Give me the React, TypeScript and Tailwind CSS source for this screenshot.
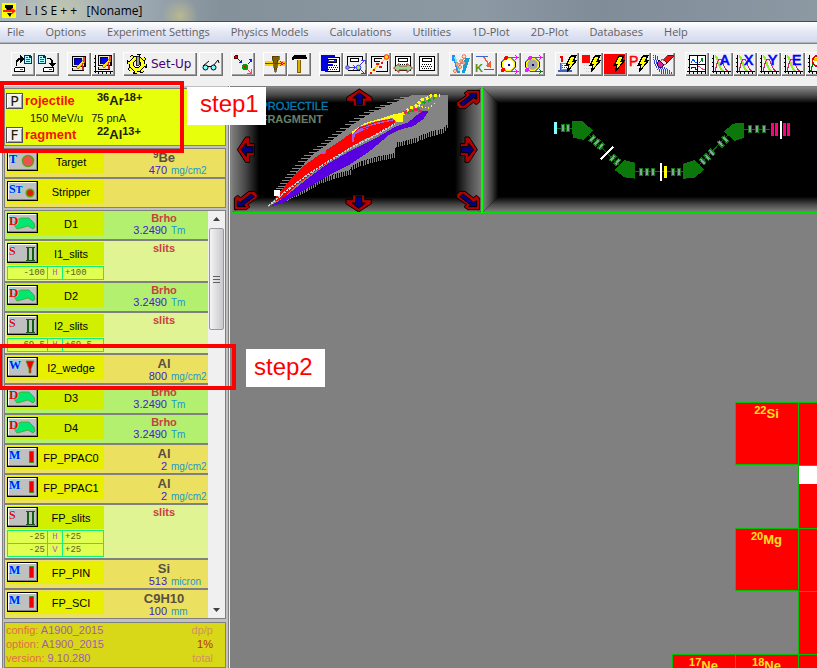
import type { ReactNode } from 'react';
import { clsx } from 'clsx';

const menuItems = [
  'File',
  'Options',
  'Experiment Settings',
  'Physics Models',
  'Calculations',
  'Utilities',
  '1D-Plot',
  '2D-Plot',
  'Databases',
  'Help',
];

/* ---------- toolbar icons, drawn on a 24x24 grid ---------- */

function Icon({ children }: { children: ReactNode }) {
  return (
    <svg viewBox="0 0 24 24" className="w-6 h-6 shrink-0" shapeRendering="crispEdges" aria-hidden="true">
      {children}
    </svg>
  );
}

const Sheet = ({ x }: { x: number }) => (
  <g transform={`translate(${x} 3)`}>
    <path d="M0 0h6l2 2v7H0z" fill="#003060" />
    <path d="M1 1h4v2h2v5H1z" fill="#b0ffff" />
    <path d="M2 2.500h2M2 4.500h4M2 6.500h4" stroke="#0060c0" fill="none" />
  </g>
);

const Disk = ({ x }: { x: number }) => (
  <g transform={`translate(${x} 15)`}>
    <path d="M1 0h10v5H0V1z" fill="#000" />
    <path d="M1 1h9v3H1z" fill="#fff" />
    <path d="M6 2h3v1H6z" fill="#f00" />
  </g>
);

const Monitor = () => (
  <g>
    <path d="M5 4h13l1 1v10H5z" fill="#000" />
    <path d="M6 5h11v9H6z" fill="#f0e8c0" />
    <path d="M7 6h8v7H7z" fill="#0000f0" />
    <path d="M7 6h8v1H7zM7 6h1v7H7z" fill="#000060" />
    <path d="M5 16h12v3H5z" fill="#000" />
    <path d="M6 16h10v2H6z" fill="#e8e0c0" />
    <path d="M9 15l7-7 2 2-7 7z" fill="#ffe000" stroke="#402000" strokeWidth="0.500" />
    <path d="M15 11l1 0 1 7h-2z" fill="#e02020" />
    <path d="M16 5l2 0 0 4-2 1z" fill="#f04030" />
  </g>
);

const Calc = () => (
  <g>
    <path d="M4.500 4.500h15v14h-15z" fill="#fff" stroke="#000" />
    <path d="M7.500 6.500h9v3h-9z" fill="#fff" stroke="#000" />
    <path d="M7 12.500h10M6 14.500h11M7 16.500h10" stroke="#000" strokeDasharray="1 1" fill="none" />
  </g>
);

const Bolt = () => (
  <path d="M16 4h5l-3 5h3l-9 11 2-7h-3z" fill="#ffff00" stroke="#000" strokeWidth="1.200" />
);

const Axes = () => (
  <path d="M4.500 3v18M3 19.500h19M7.500 19v3M11.500 19v3M15.500 19v3M19.500 19v3M3 6.500h2M3 10.500h2M3 14.500h2" stroke="#000" fill="none" />
);

const Curves = ({ letter }: { letter: string }) => (
  <Icon>
    <path d="M6 4c4 1 3 14 9 15" stroke="#90f020" strokeWidth="2" fill="none" />
    <path d="M6 19c2-5 2-12 5-12s3 10 8 12" stroke="#d02060" strokeWidth="1.200" fill="none" />
    <Axes />
    <text x="11" y="13" fontSize="14" fill="#0000ff" stroke="#0000ff" strokeWidth="0.700" className="font-['Liberation_Sans',sans-serif]">
      {letter}
    </text>
  </Icon>
);

const Beam = ({ fill, out }: { fill: string; out: string }) => (
  <Icon>
    <g shapeRendering="geometricPrecision">
      <circle cx="11.500" cy="12.500" r="6" fill={fill} stroke="#ffff00" strokeWidth="1.500" />
      <path d="M9 5.500h5l4.500 4.500v5l-4.500 4.500H9L4.500 15v-5z" fill="none" stroke="#000080" />
    </g>
    <path d="M9 5.500h12M18 3.500l3 2-3 2" stroke="#ff00ff" fill="none" />
    <path d="M9 19.500h12M18 17.500l3 2-3 2" stroke={out} fill="none" />
    <path d="M11 12h2v2h-2z" fill="#0000a0" />
    <circle cx="9" cy="6" r="2" fill={out === '#008000' ? '#e020ff' : '#ff0000'} />
    <circle cx="6" cy="18" r="2" fill={out === '#008000' ? '#e020ff' : '#ff0000'} />
  </Icon>
);

const icons: Record<string, ReactNode> = {
  open: (
    <Icon>
      <path d="M5.500 14V9.500L8 7h3" stroke="#000" strokeWidth="1.600" fill="none" />
      <path d="M9 3l4 4-4 4z" fill="#000" />
      <Sheet x={13} />
      <Disk x={3} />
    </Icon>
  ),
  save: (
    <Icon>
      <path d="M12 6.500h3l2 2V12" stroke="#000" strokeWidth="1.600" fill="none" />
      <path d="M13 11h8l-4 4z" fill="#000" />
      <Sheet x={3} />
      <Disk x={8} />
    </Icon>
  ),
  screen: (
    <Icon>
      <Monitor />
    </Icon>
  ),
  screenPlot: (
    <Icon>
      <g transform="translate(2 -1)">
        <Monitor />
      </g>
      <Axes />
    </Icon>
  ),
  glasses: (
    <Icon>
      <g shapeRendering="geometricPrecision">
        <path d="M4 14l6-5M14 14l5-6M19 8l1 3" stroke="#000" fill="none" />
        <circle cx="6.500" cy="15.500" r="2.500" fill="#80ffff" stroke="#000" />
        <circle cx="14.500" cy="15.500" r="2.500" fill="#80ffff" stroke="#000" />
        <path d="M9 14.500h3" stroke="#000" />
      </g>
    </Icon>
  ),
  collide: (
    <Icon>
      <path d="M6 6l4 4M17 12l3-3" stroke="#0020ff" />
      <path d="M11 7v4H7zM17 7h4v4z" fill="#0020ff" />
      <path d="M16 17l4 4M20 17v4h-4" stroke="#ff4060" fill="none" />
      <circle cx="5" cy="5" r="2" fill="#e00000" stroke="#000" strokeWidth="0.600" />
      <circle cx="14" cy="15" r="3" fill="#00a000" />
      <circle cx="14" cy="15" r="1.500" fill="#ff0000" />
    </Icon>
  ),
  target: (
    <Icon>
      <path d="M2 9h20v5H2z" fill="#ffd000" />
      <path d="M9 4h7v4h-1l-1 8-1 4h-1l-1-4-1-8H9z" fill="#806000" stroke="#403000" strokeWidth="0.600" />
      <path d="M2 11.500h17M17 9.500l4 2-4 2" stroke="#ff0000" fill="none" />
    </Icon>
  ),
  hammer: (
    <Icon>
      <path d="M5 5l3-2h11v2h1v2H8L5 8z" fill="#000" />
      <path d="M10 8h4v13h-4z" fill="#806000" />
      <path d="M11 8h2v12h-2z" fill="#e0b000" />
    </Icon>
  ),
  calcBlue: (
    <Icon>
      <path d="M2 3h14v2H6v14H2z" fill="#0000e0" />
      <path d="M6.500 5.500h14v14h-14z" fill="#fff" stroke="#000" />
      <path d="M6 5h3v15H6z" fill="#0000e0" />
      <path d="M8.500 7.500h9v3h-9z" fill="#2020ff" stroke="#000" />
      <path d="M10 8.500h5" stroke="#fff" />
      <path d="M8 12h6v2H8z" fill="#0000e0" />
      <path d="M9 13.500h10M8 15.500h11M9 17.500h10" stroke="#000060" strokeDasharray="1 1" />
    </Icon>
  ),
  calcArrows: (
    <Icon>
      <path d="M4.500 14V4.500h15V8M4.500 18.500h12" fill="none" stroke="#000" />
      <path d="M7.500 6.500h8v3h-8z" fill="#fff" stroke="#000" />
      <path d="M6 15.500h6M17 13l4-4M17 17l4 4" stroke="#4030ff" fill="none" />
      <path d="M18 8h4v4M18 21.500h4v-4M10 13l2 2.500-2 2.500" stroke="#4030ff" fill="none" />
      <g shapeRendering="geometricPrecision">
        <circle cx="4.500" cy="15.500" r="1.800" fill="#80c040" stroke="#4030ff" />
        <circle cx="15.500" cy="15.500" r="2.300" fill="#80ff40" stroke="#4030ff" />
      </g>
    </Icon>
  ),
  calcReact: (
    <Icon>
      <path d="M4.500 16V4.500h12M20.500 9v10.500H9" fill="none" stroke="#000" />
      <path d="M15 6.500H7.500v3h5" fill="none" stroke="#000" />
      <path d="M3 21L19 6" stroke="#ffd000" strokeDasharray="2 1" />
      <path d="M9 11h3v2H9zM12 14h3v2h-3zM6 17h2v2H6zM14 10h2v2h-2zM3 20h2v2H3z" fill="#f01000" />
      <circle cx="19.500" cy="5" r="2.300" fill="#ffe000" stroke="#ff2000" shapeRendering="geometricPrecision" />
    </Icon>
  ),
  calcRange: (
    <Icon>
      <Calc />
      <path d="M2.500 16L8 11.500V14h8v-2.500l5.500 4.500-5.500 4.500V18H8v2.500z" fill="#98d098" stroke="#a04030" shapeRendering="geometricPrecision" />
    </Icon>
  ),
  calc: (
    <Icon>
      <Calc />
    </Icon>
  ),
  atoms: (
    <Icon>
      <path d="M3 3h3l4 12 1 6H8L5 9H3z" fill="#2090f0" />
      <path d="M16 6h5l-5 15h-3z" fill="#10a0d8" />
      <path d="M5 5h2l4 14H9z" fill="#60f0f0" />
      <path d="M6 20L16 4M7 12l11-1M8 18l8-13" stroke="#907050" fill="none" strokeWidth="0.500" />
      <g fill="#fff0e0" stroke="#f04820" strokeWidth="0.800" shapeRendering="geometricPrecision">
        <circle cx="15" cy="4.500" r="1.800" />
        <circle cx="12" cy="9" r="1.300" />
        <circle cx="8" cy="12" r="1.300" />
        <circle cx="15" cy="11" r="1.300" />
        <circle cx="6" cy="19" r="1.500" />
        <circle cx="11" cy="15" r="1.500" />
      </g>
    </Icon>
  ),
  kinematics: (
    <Icon>
      <path d="M3 4.500h12M11 17.500h10" stroke="#4060d0" strokeWidth="1.600" />
      <path d="M11 5l5 8" stroke="#f06030" strokeWidth="1.500" />
      <path d="M18 9v7l-6-2z" fill="#f06030" />
      <text x="2" y="20" fontSize="11" fontWeight="bold" fill="#509020" className="font-['Liberation_Sans',sans-serif]">
        K
      </text>
    </Icon>
  ),
  beam: <Beam fill="#fff" out="#ff00ff" />,
  beamGray: <Beam fill="#a8a8a8" out="#008000" />,
  boltOne: (
    <Icon>
      <path d="M5 4h3v6H6V6H5z" fill="#f00000" />
      <path d="M3 20h14v-2H6v-7H5v7H3z" fill="#4060c0" />
      <path d="M6 11h8v6H6z" fill="#fff" stroke="#8090c0" />
      <path d="M7 13.500h6M7 15.500h6" stroke="#008040" strokeDasharray="1 1" />
      <Bolt />
    </Icon>
  ),
  boltSquare: (
    <Icon>
      <path d="M3 3h8v8H3z" fill="#ff0000" />
      <path d="M5 13h10M5 16h10M7 19h8" stroke="#d0d0d0" strokeDasharray="1 1" />
      <Bolt />
    </Icon>
  ),
  boltRed: (
    <Icon>
      <path d="M1 2h21v20H1z" fill="#ff0000" />
      <Bolt />
    </Icon>
  ),
  boltP: (
    <Icon>
      <text x="2" y="14" fontSize="14" fill="#ff0000" stroke="#ff0000" strokeWidth="0.500" className="font-['Liberation_Sans',sans-serif]">
        P
      </text>
      <Bolt />
    </Icon>
  ),
  eraser: (
    <Icon>
      <path d="M2 3.500h4M2 5.500h6M2 7.500h6M3 9.500h5M3 11.500h6M4 13.500h6M5 15.500h10M6 17.500h12M8 19.500h12M10 21.500h12" stroke="#3040e0" strokeDasharray="1 1" fill="none" />
      <path d="M3 4.500h4M3 6.500h5M2 8.500h6M2 10.500h7M3 12.500h6M4 14.500h9M6 16.500h10M7 18.500h12M9 20.500h12" stroke="#3040e0" strokeDasharray="1 1" strokeDashoffset="1" fill="none" />
      <path d="M13 7l4-4h5v2l-7 7-3-1z" fill="#f01010" stroke="#400000" strokeWidth="0.700" />
      <path d="M11 7l5 4-3 2-4-3z" fill="#ffe0e0" stroke="#000" strokeWidth="0.500" />
      <path d="M8 8l5 5-2 2H8l-2-3z" fill="#d020a0" stroke="#000" strokeWidth="0.800" />
    </Icon>
  ),
  plots: (
    <Icon>
      <path d="M4.500 3.500h16v16h-16z" fill="#fff" stroke="#000" />
      <path d="M12.500 4v15M5 12.500h15M2 19.500h3M4.500 19v3M8.500 19v3M12.500 19v3M16.500 19v3M20.500 19v3M3 7.500h2M3 15.500h2" stroke="#000" />
      <path d="M6 11l2-4 2 3 2 1" stroke="#0060ff" fill="none" />
      <path d="M14 11l2-2 1-3 1 4" stroke="#008030" fill="none" />
      <path d="M6 17v-2h4v2h2" stroke="#0020a0" fill="none" />
      <path d="M13 14c3 0 3 4 7 4" stroke="#f04080" fill="none" />
    </Icon>
  ),
  plotA: <Curves letter="A" />,
  plotX: <Curves letter="X" />,
  plotY: <Curves letter="Y" />,
  plotE: <Curves letter="E" />,
  plotS: (
    <Icon>
      <Axes />
      <path d="M6 19c1-8 3-8 5-8" stroke="#008000" fill="none" strokeWidth="1.400" />
      <circle cx="13" cy="9" r="5.500" fill="#fff" stroke="#e00000" strokeWidth="1.500" />
      <path d="M9 6h3v3H9z" fill="#ffc000" />
    </Icon>
  ),
};

const toolGroups: { gap: string; tools: string[] }[] = [
  { gap: 'ml-2', tools: ['calcBlue', 'calcArrows', 'calcReact', 'calcRange', 'calc'] },
  { gap: 'ml-2.5', tools: ['atoms', 'kinematics', 'beam', 'beamGray'] },
  { gap: 'ml-2.5', tools: ['boltOne', 'boltSquare', 'boltRed', 'boltP', 'eraser'] },
  { gap: 'ml-2.5', tools: ['plots', 'plotA', 'plotX', 'plotY', 'plotE', 'plotS'] },
];

function ToolButton({ name, className }: { name: string; className?: string }) {
  return (
    <button
      type="button"
      aria-label={name}
      className={clsx(
        'w-6 h-6 shrink-0 bg-[#f0f0f0] shadow-[inset_1px_1px_0_#fff,inset_-1px_-1px_0_#707070,inset_-2px_-2px_0_#a0a0a0]',
        className,
      )}
    >
      {icons[name]}
    </button>
  );
}

function Toolbar() {
  return (
    <div className="flex items-start h-[42px] pl-[11px] pt-2 bg-[#f0f0f0] overflow-hidden">
      <ToolButton name="open" />
      <ToolButton name="save" />
      <ToolButton name="screen" className="ml-2" />
      <ToolButton name="screenPlot" />
      <button
        type="button"
        className="flex items-center shrink-0 w-[74px] h-6 ml-2 pl-0.5 bg-[#f0f0f0] shadow-[inset_1px_1px_0_#fff,inset_-1px_-1px_0_#707070,inset_-2px_-2px_0_#a0a0a0]"
      >
        <Icon>
          <circle cx="12" cy="12" r="8.500" fill="none" stroke="#000" strokeWidth="4" strokeDasharray="3.400 3.200" />
          <circle cx="12" cy="12" r="7.500" fill="#ffff20" stroke="#000" />
          <circle cx="12" cy="12" r="8.500" fill="none" stroke="#ffff20" strokeWidth="2" strokeDasharray="2.400 4.200" />
          <circle cx="12" cy="12" r="3.500" fill="#f0f0f0" stroke="#000" />
          <path d="M11 4h3v9h-3z" fill="#a0a0a0" stroke="#000" strokeWidth="0.800" />
        </Icon>
        <span className="ml-0.5 font-['DejaVu_Sans',sans-serif] text-[12px] leading-4 text-[#480078]">Set-Up</span>
      </button>
      <ToolButton name="glasses" className="ml-0.5" />
      <ToolButton name="collide" className="ml-2" />
      <ToolButton name="target" className="ml-2" />
      <ToolButton name="hammer" />
      {toolGroups.map((group, index) => (
        <div key={index} className={clsx('flex shrink-0', group.gap)}>
          {group.tools.map((tool) => (
            <ToolButton key={tool} name={tool} />
          ))}
        </div>
      ))}
    </div>
  );
}

/* ---------- left set-up panel ---------- */

type Kind = 'T' | 'St' | 'D' | 'S' | 'W' | 'M';

interface Block {
  kind: Kind;
  name: string;
  title: ReactNode;
  value?: string;
  unit?: string;
  slits?: [string, string, string][];
}

const topBlocks: Block[] = [
  { kind: 'T', name: 'Target', title: <><sup className="text-[10px] -top-1">9</sup>Be</>, value: '470', unit: 'mg/cm2' },
  { kind: 'St', name: 'Stripper', title: '' },
];

const blocks: Block[] = [
  { kind: 'D', name: 'D1', title: 'Brho', value: '3.2490', unit: 'Tm' },
  { kind: 'S', name: 'I1_slits', title: 'slits', slits: [['-100', 'H', '+100']] },
  { kind: 'D', name: 'D2', title: 'Brho', value: '3.2490', unit: 'Tm' },
  { kind: 'S', name: 'I2_slits', title: 'slits', slits: [['-69.5', 'H', '+69.5']] },
  { kind: 'W', name: 'I2_wedge', title: 'Al', value: '800', unit: 'mg/cm2' },
  { kind: 'D', name: 'D3', title: 'Brho', value: '3.2490', unit: 'Tm' },
  { kind: 'D', name: 'D4', title: 'Brho', value: '3.2490', unit: 'Tm' },
  { kind: 'M', name: 'FP_PPAC0', title: 'Al', value: '2', unit: 'mg/cm2' },
  { kind: 'M', name: 'FP_PPAC1', title: 'Al', value: '2', unit: 'mg/cm2' },
  { kind: 'S', name: 'FP_slits', title: 'slits', slits: [['-25', 'H', '+25'], ['-25', 'V', '+25']] },
  { kind: 'M', name: 'FP_PIN', title: 'Si', value: '513', unit: 'micron' },
  { kind: 'M', name: 'FP_SCI', title: 'C9H10', value: '100', unit: 'mm' },
];

function BlockIcon({ kind }: { kind: Kind }) {
  const red = kind === 'D' || kind === 'S';
  return (
    <svg viewBox="0 0 31 20" className="block w-[31px] h-5 overflow-visible" aria-hidden="true">
      <path d="M0 0h31v20H0z" fill="#000" />
      <path d="M1 1h29v18H1z" fill="#808080" />
      <path d="M1 1h28v17H1z" fill="#fff" />
      <path d="M2 2h27v16H2z" fill="#c0c0c0" />
      {kind === 'T' && <circle cx="21" cy="10" r="5.500" fill="#f05050" stroke="#60a010" strokeWidth="1.500" />}
      {kind === 'St' && <circle cx="23" cy="12" r="3.800" fill="#e02000" stroke="#60a010" strokeWidth="1.500" />}
      {kind === 'D' && (
        <path d="M8 8l6-3h8l5 5 1 4-2 2-5-3-7 2-4 1-3-4z" fill="#00e870" stroke="#50a020" strokeWidth="0.800" />
      )}
      {kind === 'S' && (
        <path d="M19 4h9v1h-1v12h1v1h-9v-1h1V5h-1zM22 5v12h3V5z" fillRule="evenodd" fill="#106010" />
      )}
      {kind === 'W' && <path d="M19 4h8l-3 8v4h-2v-4z" fill="#f00000" stroke="#609010" strokeWidth="0.800" />}
      {kind === 'M' && <path d="M22.500 4.500h4v11h-4z" fill="#f00000" stroke="#409010" />}
      <text
        x="2"
        y="12"
        fontSize={kind === 'D' ? 13 : 12}
        fontWeight="bold"
        fill={red ? '#f00000' : '#0020f0'}
        stroke="#70f0ff"
        strokeWidth="1"
        paintOrder="stroke"
        className="font-['Liberation_Serif',serif]"
      >
        {kind === 'St' ? (
          <>
            S<tspan fontSize="10">T</tspan>
          </>
        ) : (
          kind
        )}
      </text>
    </svg>
  );
}

function BlockRow({ block }: { block: Block }) {
  const { kind, name, title, value, unit, slits } = block;
  const magnetic = kind === 'D' || kind === 'S';
  return (
    <li
      className={clsx(
        'flex pl-0.5 pt-px pb-px',
        kind === 'D' && 'bg-[#b4f070]',
        kind === 'S' && 'bg-[#e0f494]',
        !magnetic && 'bg-[#ece060]',
      )}
    >
      <div className="w-[97px] shrink-0">
        <div className={clsx('flex pt-px h-[23px] mb-[3px]', magnetic ? 'bg-[#d0f000]' : 'bg-[#e8f000]', slits && 'mb-px')}>
          <button type="button" aria-label={`Edit ${name}`} className="h-5 shrink-0">
            <BlockIcon kind={kind} />
          </button>
          <span className="flex-1 pt-px text-center text-[11px] leading-5 text-black whitespace-nowrap">{name}</span>
        </div>
        {slits && (
          <table className="w-full table-fixed border-collapse bg-[#e0ff50] font-['Liberation_Mono',monospace] text-[9px] leading-3 text-[#606020]">
            <tbody>
              {slits.map(([low, axis, high]) => (
                <tr key={axis}>
                  <td className="w-10 border border-[#10f080] p-0 pr-0.5 text-right">{low}</td>
                  <td className="w-[15px] border border-[#10f080] p-0 text-center text-[#b060c0]">{axis}</td>
                  <td className="border border-[#10f080] p-0 pl-0.5">{high}</td>
                </tr>
              ))}
            </tbody>
          </table>
        )}
      </div>
      <div className="flex-1 min-w-0">
        <p
          className={clsx(
            'pl-4 text-center font-bold',
            magnetic ? 'text-[11px] leading-3 text-[#c84040]' : 'text-[13px] leading-4 text-[#585040]',
          )}
        >
          {title}
        </p>
        {value && (
          <p className={clsx('flex items-baseline gap-1 text-[11px] whitespace-nowrap', magnetic ? 'leading-3' : 'leading-2')}>
            <span className="w-[63px] shrink-0 text-right text-[#4020d0]">{value}</span>
            <span className="text-[10px] text-[#1898d0]">{unit}</span>
          </p>
        )}
      </div>
    </li>
  );
}

function BlockScrollbar() {
  return (
    <div className="flex flex-col items-center w-[17px] shrink-0 bg-[#f0f0f0]">
      <svg viewBox="0 0 17 17" className="w-[17px] h-[17px]" aria-hidden="true">
        <path d="M5 10l3.500-4 3.500 4z" fill="#404040" />
      </svg>
      <div className="flex flex-col items-center justify-center gap-0.5 w-[15px] h-[102px] rounded-xs border border-[#989898] bg-linear-to-r from-[#f4f4f4] to-[#c8c8cc]">
        <span className="w-[7px] h-px bg-[#606060]" />
        <span className="w-[7px] h-px bg-[#606060]" />
        <span className="w-[7px] h-px bg-[#606060]" />
      </div>
      <svg viewBox="0 0 17 17" className="w-[17px] h-[17px] mt-auto" aria-hidden="true">
        <path d="M5 7l3.500 4L12 7z" fill="#404040" />
      </svg>
    </div>
  );
}

function Nuclide({ mass, symbol, charge }: { mass: string; symbol: string; charge?: string }) {
  return (
    <span className="font-bold text-[13px]">
      <sup className="text-[11px] -top-1">{mass}</sup>
      {symbol}
      {charge && <sup className="text-[11px] -top-1">{charge}</sup>}
    </span>
  );
}

function IonLine({ initial, rest, children }: { initial: string; rest: string; children: ReactNode }) {
  return (
    <div className="flex items-center h-[18px] pl-px">
      <button
        type="button"
        aria-label={initial + rest}
        className="w-[17px] h-4 border border-[#505050] bg-[#f0f0f0] shadow-[inset_1px_1px_0_#fff,inset_-1px_-1px_0_#a0a0a0] font-['DejaVu_Sans',sans-serif] text-[14px] leading-3"
      >
        {initial}
      </button>
      <span className="w-[74px] pl-0.5 font-bold text-[13px] leading-4 text-[#f81000]">{rest}</span>
      {children}
    </div>
  );
}

function SetupPanel() {
  return (
    <aside className="w-[230px] shrink-0 pl-0.5 pr-px bg-[#f0f0f0]">
      <div className="flex flex-col gap-0.5 h-full border-x border-[#808080] bg-[#c0c0c0] pl-px pr-0.5 pt-0.5">
        <section className="h-[58px] border border-[#808080] bg-[#e8ff0c] pt-[3px] text-[#202000]">
          <IonLine initial="P" rest="rojectile">
            <Nuclide mass="36" symbol="Ar" charge="18+" />
          </IonLine>
          <p className="flex gap-2 pl-[25px] text-[11px] leading-4">
            <span>150 MeV/u</span>
            <span>75 pnA</span>
          </p>
          <IonLine initial="F" rest="ragment">
            <Nuclide mass="22" symbol="Al" charge="13+" />
          </IonLine>
        </section>

        <ul className="flex flex-col gap-0.5 border border-[#808080] bg-[#808080] *:pr-[17px]">
          {topBlocks.map((block) => (
            <BlockRow key={block.name} block={block} />
          ))}
        </ul>

        <section className="flex border border-[#808080] bg-[#808080]">
          <ul className="flex-1 min-w-0 flex flex-col gap-0.5">
            {blocks.map((block) => (
              <BlockRow key={block.name} block={block} />
            ))}
          </ul>
          <BlockScrollbar />
        </section>

        <section className="flex-1 flex justify-between mt-px border border-[#808080] bg-[#d8d818] pl-px pr-3 text-[11px] leading-[14px] text-[#a05cb0]">
          <div>
            <p><span className="text-[#e07040]">config:</span> A1900_2015</p>
            <p><span className="text-[#e07040]">option:</span> A1900_2015</p>
            <p><span className="text-[#e07040]">version:</span> 9.10.280</p>
          </div>
          <div className="text-right text-[#d09060]">
            <p>dp/p</p>
            <p className="text-[#b03020]">1%</p>
            <p>total</p>
          </div>
        </section>
      </div>
    </aside>
  );
}

/* ---------- top strip: identification plot and beam line ---------- */

type Point = [number, number];

// short lines that leave an outline at regular steps
function teeth(points: Point[], step: number, dx: number, dy: number) {
  let d = '';
  for (let i = 1; i < points.length; i++) {
    const [x0, y0] = points[i - 1];
    const [x1, y1] = points[i];
    const n = Math.max(1, Math.round((dx ? Math.abs(y1 - y0) : Math.abs(x1 - x0)) / step));
    for (let k = 0; k < n; k++) {
      d += `M${Math.round(x0 + ((x1 - x0) * k) / n)} ${Math.round(y0 + ((y1 - y0) * k) / n)}l${dx} ${dy}`;
    }
  }
  return d;
}

const upperEdge: Point[] = [
  [170, 335], [195, 300], [225, 265], [262, 225], [300, 198], [345, 162], [395, 125], [440, 98], [490, 75], [530, 58], [565, 44],
];
const lowerEdge: Point[] = [
  [668, 130], [655, 145], [610, 157], [570, 175], [515, 188], [508, 220], [465, 228], [420, 240], [382, 256], [375, 270], [335, 280], [290, 296], [260, 312], [225, 330], [180, 352],
];

const straightArrows: [number, number, number][] = [
  [403, 52, 0], [62, 209, -90], [732, 209, 90], [401, 371, 180],
];
// corner arrows are mirrored copies of the upper right one
const cornerArrows: [number, number, number, number][] = [
  [730, 58, 1, 1], [730, 362, 1, -1], [62, 362, -1, -1], [62, 58, -1, 1],
];

function Bevel({ x, y, w, h, bx, by }: { x: number; y: number; w: number; h: number; bx: number; by: number }) {
  const id = `bevel${w}`;
  const stops = (
    <>
      <stop offset="0" stopColor="#808080" />
      <stop offset="0.500" stopColor="#484848" />
      <stop offset="1" stopColor="#000" />
    </>
  );
  return (
    <>
      <defs>
        <linearGradient id={`${id}t`} x1="0" y1="0" x2="0" y2="1">{stops}</linearGradient>
        <linearGradient id={`${id}b`} x1="0" y1="1" x2="0" y2="0">{stops}</linearGradient>
        <linearGradient id={`${id}l`} x1="0" y1="0" x2="1" y2="0">{stops}</linearGradient>
        <linearGradient id={`${id}r`} x1="1" y1="0" x2="0" y2="0">{stops}</linearGradient>
      </defs>
      <rect x={x} y={y} width={w} height={h} fill="#000" />
      <path d={`M${x} ${y}h${w}l${-bx} ${by}h${2 * bx - w}z`} fill={`url(#${id}t)`} />
      <path d={`M${x} ${y + h}h${w}l${-bx} ${-by}h${2 * bx - w}z`} fill={`url(#${id}b)`} />
      <path d={`M${x} ${y}l${bx} ${by}v${h - 2 * by}l${-bx} ${by}z`} fill={`url(#${id}l)`} />
      <path d={`M${x + w} ${y}l${-bx} ${by}v${h - 2 * by}l${bx} ${by}z`} fill={`url(#${id}r)`} />
    </>
  );
}

function IdentificationPlot() {
  return (
    <svg viewBox="18 21 756 378" className="w-[252px] h-[126px] shrink-0" role="img" aria-label="Identification plot">
      <Bevel x={18} y={21} w={756} h={378} bx={84} by={48} />
      <g shapeRendering="crispEdges">
        <path d={`M130 380L${[...upperEdge, [668, 44] as Point, ...lowerEdge].join('L')}z`} fill="#848484" />
        <path d={teeth(upperEdge, 9, -24, 0)} stroke="#848484" strokeWidth="3" />
        <path d={teeth(lowerEdge, 6, 0, 14)} stroke="#848484" strokeWidth="3" />
        <path d="M135 372l30-35 32-40 40-40 53-38 50-32 42-30 20-14 60-20 50-8-4 18-44 25-50 22-50 30-50 35-50 33-50 38-40 38z" fill="#ff0000" />
        <path d="M380 185v-22l22-16 48-18 58-12-8 8-50 12-40 16-20 10-4 22z" fill="#a858d8" />
        <path d="M140 378l50-36 60-48 52-39 80-46 70-34 60-35 36-12 44-36 18 2-14 22-30 22-44 12-30 15-60 50-60 40-50 25-50 30-50 30-52 30z" fill="#5800e0" />
        <path d="M130 378l50-42 60-46 62-41 80-48 62-32 66-37" fill="none" stroke="#b8d8e0" strokeWidth="5" strokeDasharray="7 3" />
        <path d="M380 165v-9l40-27 60-17 28-10 26-4v28h-20l-12-12-60 12-38 14z" fill="#ffff00" />
        <path d="M406 148l44-14 52-12 10 6-62 14z" fill="#ff0000" />
        <path d="M534 102l22-18 18-6 16-18 16-4 14-10h26" fill="none" stroke="#ffff00" strokeWidth="9" strokeDasharray="9 5" />
        <path d="M546 100l24-10 20-4 6-18 18-8 22-8" fill="none" stroke="#00b000" strokeWidth="7" strokeDasharray="7 9" />
        <path d="M536 98l20-6 20-4 14 8" fill="none" stroke="#f02060" strokeWidth="9" strokeDasharray="11 5" />
        <path d="M570 74l20 6 20 4 20-14" fill="none" stroke="#ffff00" strokeWidth="4" strokeDasharray="5 5" />
        <path d="M290 222l8-8M297 222l6-8" stroke="#a858d8" strokeWidth="5" />
        <path d="M147 330h18v18h-18z" fill="#fff" />
      </g>
      <g fontSize="33" textAnchor="end" className="font-['Liberation_Sans',sans-serif]">
        <text x="310" y="90" fill="#0080b8" stroke="#0080b8">PROJECTILE</text>
        <text x="294" y="129" fontWeight="bold" fill="#688068">FRAGMENT</text>
      </g>
      {straightArrows.map(([x, y, angle]) => (
        <g key={`${x}-${y}`} transform={`translate(${x} ${y}) rotate(${angle})`}>
          <path d="M0-25L38 0v12H18v14h-36V12h-20V0z" fill="#b00000" stroke="#000" strokeWidth="3" />
          <path d="M0-14L20 2H9v20H-9V2h-11z" fill="#000080" stroke="#000" strokeWidth="3" />
        </g>
      ))}
      {cornerArrows.map(([x, y, sx, sy]) => (
        <g key={`${x}-${y}`} transform={`translate(${x} ${y}) scale(${sx} ${sy})`}>
          <path d="M34-27V8L24 16 15 9-10 28h-16L-35 18V9L-6-12l-7-6 11-9z" fill="#b00000" stroke="#000" strokeWidth="3" />
          <path d="M25-18V0l-9-5-32 25-10-8L6-12l-5-6z" fill="#000080" stroke="#000" strokeWidth="3" />
        </g>
      ))}
      <path d="M19.500 399V22.500H774M19 397.500h755" fill="none" stroke="#00e000" strokeWidth="3" />
      <path d="M771 21v378" stroke="#00ff00" strokeWidth="6" />
    </svg>
  );
}

// quadrupoles: position and angle along the line
const quads: [number, number, number][] = [
  [249, 144, 0], [264, 144, 0],
  [337, 176, 40], [350, 187, 40], [363, 199, 40],
  [398, 234, 40], [412, 246, 40],
  [483, 275, 0], [501, 275, 0], [519, 275, 0],
  [579, 275, 0], [596, 275, 0],
  [668, 244, -42], [682, 231, -42], [695, 217, -42],
  [722, 192, -42], [736, 178, -42],
  [810, 148, 0], [831, 148, 0], [852, 148, 0],
];

function BeamLine() {
  return (
    <div className="flex-1 min-w-0 overflow-hidden bg-black border-y border-[#00e000]">
      <svg viewBox="9 24 1005 372" className="w-[335px] h-[124px]" role="img" aria-label="Beam line scheme">
        <Bevel x={9} y={24} w={1100} h={372} bx={46} by={46} />
        <g shapeRendering="crispEdges">
          <path d="M228 145h50M328 166l90 90M465 275h145M655 258l90-95M792 149h78" stroke="#107010" strokeWidth="3" fill="none" />
          {quads.map(([x, y, angle]) => (
            <g key={`${x}-${y}`} transform={`translate(${x} ${y}) rotate(${angle})`}>
              <path d="M-6-12H6v24H-6z" fill="#107810" />
              <path d="M-3-9H3v18H-3z" fill="#88a0a0" />
            </g>
          ))}
          <path d="M276 123h30l33 28-27 29-34-7zM465 248v48l-32-4-29-22 29-30zM609 252l34-12 29 30-30 24-33 2zM792 128v46l-28 9-32-28 24-22 16-5z" fill="#0c780c" />
          <path d="M222 126h9v36h-9z" fill="#80ffff" />
          <path d="M362 238l38-38" stroke="#fff" strokeWidth="5" />
          <path d="M540 249h6v54h-6zM900 123h6v54h-6z" fill="#fff" />
          <path d="M552 258h9v36h-9z" fill="#ffff00" />
          <path d="M873 129h9v39h-9zM885 129h9v39h-9zM909 129h9v39h-9zM921 129h9v39h-9z" fill="#ff0080" />
        </g>
      </svg>
    </div>
  );
}

/* ---------- nuclide chart ---------- */

const cell = 'border-t border-l border-[#00c000] bg-[#ff0000] pt-px pr-px text-center leading-[18px] text-[#ffe020]';

function NuclideChart() {
  return (
    <div className="flex-1 flex justify-end pt-[189px] overflow-hidden bg-[#808080]">
      <div className="grid grid-cols-[63px_63px_63px] auto-rows-[63px] h-[315px] -mr-11">
        <div />
        <div className={clsx(cell, 'border-b')}><Nuclide mass="22" symbol="Si" /></div>
        <div className={cell} />

        <div />
        <div />
        <div className={cell}>
          <div className="h-[18px] -mt-px -mr-px bg-white" />
        </div>

        <div />
        <div className={clsx(cell, 'border-b')}><Nuclide mass="20" symbol="Mg" /></div>
        <div className={cell} />

        <div />
        <div />
        <div className={cell} />

        <div className={cell}><Nuclide mass="17" symbol="Ne" /></div>
        <div className={cell}><Nuclide mass="18" symbol="Ne" /></div>
        <div className={cell} />
      </div>
    </div>
  );
}

export default function App() {
  return (
    <div className="relative flex flex-col h-screen overflow-hidden bg-[#808080] font-['Liberation_Sans',Arial,sans-serif]">
      <header className="font-['Open_Sans',sans-serif]">
        <div className="flex items-center h-[22px] pl-0.5 border-b border-[#484c50] bg-[radial-gradient(circle_at_180px_16px,#b8b890_0,transparent_18px),radial-gradient(circle_at_60px_14px,#c4c8b0_0,transparent_50px),linear-gradient(to_right,#a8b4bc_0,#a0acb4_130px,#84909a_220px,#8c98a2_480px,#808c98_600px,#8c98a2)]">
          <svg viewBox="0 0 14 15" className="w-3.5 h-[15px]" aria-hidden="true">
            <path d="M0 0h14v15H0z" fill="#ffff00" />
            <path d="M3 2h8v3H3zM4 5h6l-1 3H5zM5 10h5l-2 4z" fill="#000" />
            <path d="M1 7h9V5l4 3-4 3V9H1z" fill="#ff2020" />
          </svg>
          <h1 className="pl-[9px] text-[12px] leading-5 text-black whitespace-pre">L I S E + +   [Noname]</h1>
        </div>
        <nav className="flex items-center gap-[21px] h-[21px] pl-[7px] border-b border-[#b0b4bc] bg-linear-to-b from-white via-[#e4e8f4] to-[#d4daee] text-[11px] leading-5 text-[#606060] whitespace-nowrap">
          {menuItems.map((item) => (
            <button key={item} type="button">{item}</button>
          ))}
        </nav>
        <div className="h-px bg-[#808488]" />
      </header>

      <Toolbar />

      <div className="flex flex-1 min-h-0">
        <SetupPanel />
        <main className="flex-1 min-w-0 flex flex-col">
          <div className="flex shrink-0 pt-px pl-px bg-[#808080]">
            <IdentificationPlot />
            <BeamLine />
          </div>
          <NuclideChart />
        </main>
      </div>

      {/* tutorial marks laid over the window */}
      <div className="absolute left-0 top-[81px] w-[184px] h-[72px] border-4 border-[#ff0000] pointer-events-none" />
      <p className="absolute left-[187px] top-[87px] w-[79px] h-[38px] bg-white pl-[13px] text-[24px] leading-[34px] text-[#ff0000]">step1</p>
      <div className="absolute -left-0.5 top-[344px] w-[238px] h-[46px] border-4 border-[#ff0000] pointer-events-none" />
      <p className="absolute left-[246px] top-[349px] w-[79px] h-[38px] bg-white pl-2 text-[24px] leading-9 text-[#ff0000]">step2</p>
    </div>
  );
}
